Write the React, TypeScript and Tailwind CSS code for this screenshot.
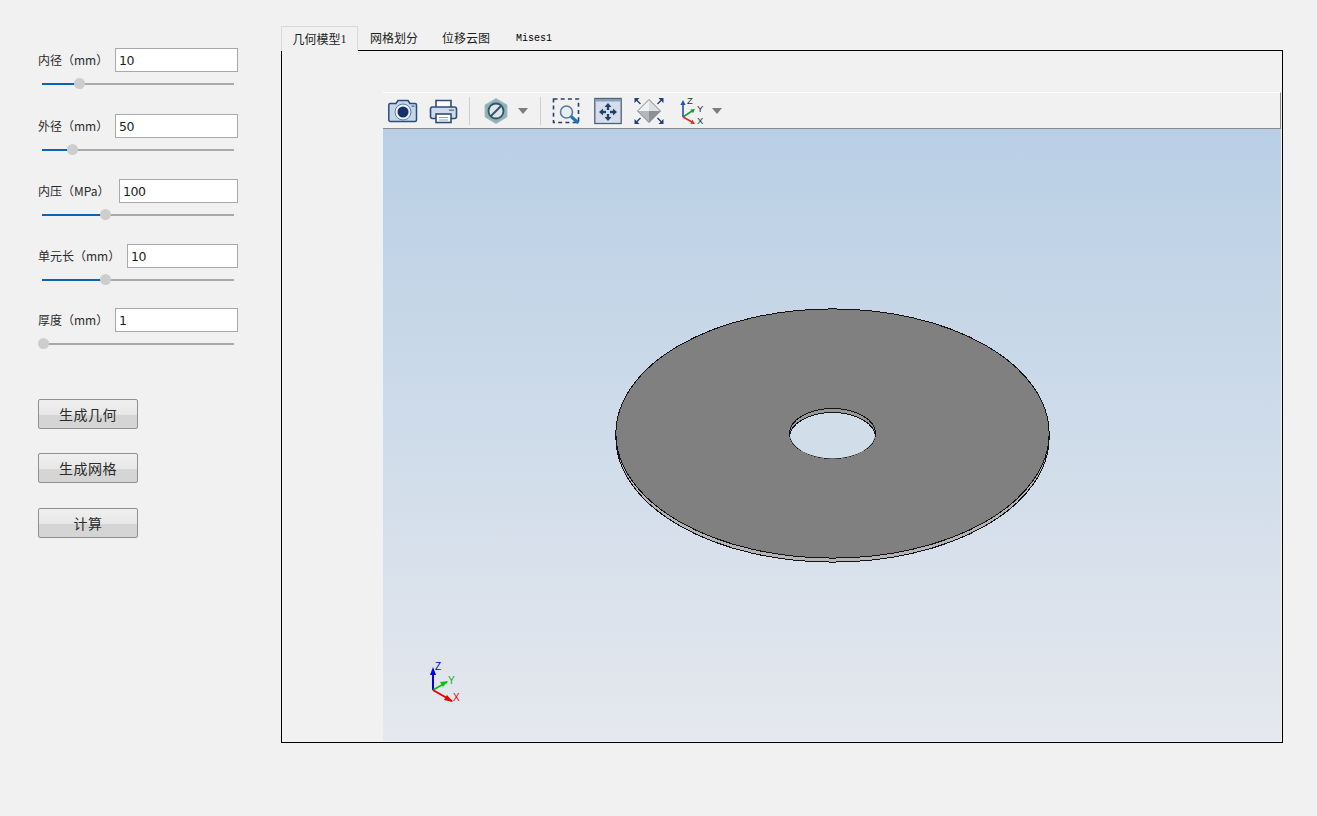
const fields = [
  { label: "内径（mm）", value: "10", input: "w-[123px]", gap: "mt-[48px]", thumb: 37 },
  { label: "外径（mm）", value: "50", input: "w-[123px]", gap: "mt-[24px]", thumb: 30 },
  { label: "内压（MPa）", value: "100", input: "w-[119px]", gap: "mt-[23px]", thumb: 63 },
  { label: "单元长（mm）", value: "10", input: "w-[111px]", gap: "mt-[23px]", thumb: 63 },
  { label: "厚度（mm）", value: "1", input: "w-[123px]", gap: "mt-[22px]", thumb: 1 },
]

const buttons = [
  { label: "生成几何", gap: "mt-[49px]" },
  { label: "生成网格", gap: "mt-[24px]" },
  { label: "计算", gap: "mt-[25px]" },
]

const tabs = [
  { label: "网格划分", cls: "w-[72px]" },
  { label: "位移云图", cls: "w-[72px]" },
]

const Field = ({ f }: { f: (typeof fields)[number] }) => (
  <div className={`${f.gap} pb-[5px]`}>
    <div className="flex h-[24px] items-center justify-between">
      <span className="whitespace-nowrap text-[12px] text-[#2a2a2a]">{f.label}</span>
      <input
        readOnly
        value={f.value}
        className={`${f.input} h-[24px] border border-[#a9a9a9] bg-white pt-px pl-[3px] font-['DejaVu_Sans',sans-serif] text-[12.5px] tracking-[-0.4px] text-[#1c1c1c] outline-none`}
      />
    </div>
    <div className="relative ml-[4px] mt-[11px] h-[2px] w-[192px] bg-[#a9a9a9]">
      <div className="h-full bg-[#0a64b4]" style={{ width: f.thumb }} />
      <div
        className="absolute top-[-5px] h-[11px] w-[11px] rounded-full bg-[#cdcdcd]"
        style={{ left: f.thumb - 5 }}
      />
    </div>
  </div>
)

const Camera = () => (
  <svg width="30" height="28" viewBox="0 0 30 28">
    <path d="M2 6.5h6l2-3h10l2 3h5a1.5 1.5 0 0 1 1.5 1.5v15a1.5 1.5 0 0 1-1.5 1.5H2A1.5 1.5 0 0 1 .8 23V8A1.5 1.5 0 0 1 2 6.5z" fill="#c5d6ea" stroke="#2c4d7c" strokeWidth="1.5" />
    <circle cx="15" cy="15" r="8" fill="#eef3f9" stroke="#5d7da6" />
    <circle cx="15" cy="15" r="5.5" fill="#14306a" />
    <rect x="23.5" y="8.5" width="3" height="1.5" fill="#5d7da6" />
  </svg>
)

const Printer = () => (
  <svg width="30" height="28" viewBox="0 0 30 28">
    <path d="M7 11V3.5h15V11" fill="#fff" stroke="#2c4d7c" strokeWidth="1.6" />
    <rect x="1.5" y="10" width="26" height="11.5" rx="2" fill="#cfdbe9" stroke="#2c4d7c" strokeWidth="1.6" />
    <rect x="20" y="12.5" width="5" height="1.5" fill="#6f7f92" />
    <rect x="7" y="17" width="15" height="8.5" fill="#fff" stroke="#2c4d7c" strokeWidth="1.6" />
    <path d="M10 20.5h9M10 23h9" stroke="#8ea0b5" />
  </svg>
)

const Section = () => (
  <svg width="26" height="28" viewBox="0 0 26 28">
    <path d="M13 1.5 24 8v12l-11 6.5L2 20V8z" fill="#8fb0b5" stroke="#a9bfc3" />
    <circle cx="13" cy="14" r="7.5" fill="#dfe6ea" stroke="#31566a" strokeWidth="1.8" />
    <path d="M8 19 18 9" stroke="#31566a" strokeWidth="2" />
  </svg>
)

const Caret = () => (
  <svg width="12" height="8" viewBox="0 0 12 8">
    <path d="M1 1h10L6 7z" fill="#7d7d7d" />
  </svg>
)

const ZoomBox = () => (
  <svg width="30" height="28" viewBox="0 0 30 28">
    <rect x="1.5" y="2" width="25" height="23.5" fill="none" stroke="#24406c" strokeWidth="1.6" strokeDasharray="4 3.2" />
    <circle cx="14.5" cy="15" r="6" fill="#e6eef6" stroke="#5d7a9c" strokeWidth="1.6" />
    <path d="M19 19.5 26.5 26" stroke="#1c75bc" strokeWidth="3" />
  </svg>
)

const FitView = () => (
  <svg width="28" height="28" viewBox="0 0 28 28">
    <rect x="0.8" y="1.5" width="26.4" height="25" fill="#d5deea" stroke="#4a6282" strokeWidth="1.3" />
    <rect x="1.5" y="2" width="25" height="2.5" fill="#8c9db4" />
    <path d="M14 6l3.5 4h-2.3v3h-2.4v-3h-2.3zM14 24l3.5-4h-2.3v-3h-2.4v3h-2.3zM5 15l4-3.5v2.3h3v2.4h-3v2.3zM23 15l-4-3.5v2.3h-3v2.4h3v2.3z" fill="#22406d" />
  </svg>
)

const Diamond = () => (
  <svg width="30" height="28" viewBox="0 0 30 28">
    <path d="M15 2.5 3.5 14H15z" fill="#eef0f2" />
    <path d="M15 2.5 26.5 14H15z" fill="#dcdfe2" />
    <path d="M15 25.5 3.5 14H15z" fill="#b4b7bb" />
    <path d="M15 25.5 26.5 14H15z" fill="#8d9095" />
    <path d="M15 2.5 26.5 14 15 25.5 3.5 14z" fill="none" stroke="#7d8590" />
    <path d="M0.5 1h5L.5 6zM29.5 1h-5l5 5zM.5 27h5l-5-5zM29.5 27h-5l5-5z" fill="#24406c" />
    <path d="M2 2.5l4.5 4.5M28 2.5l-4.5 4.5M2 25.5l4.5-4.5M28 25.5l-4.5-4.5" stroke="#24406c" strokeWidth="1.4" />
  </svg>
)

const ToolbarTriad = () => (
  <svg width="26" height="30" viewBox="0 0 26 30">
    <path d="M4 21V7" stroke="#1f4fc0" strokeWidth="1.6" />
    <path d="M4 4l2.6 5H1.4z" fill="#1f4fc0" />
    <path d="M4 21l9-6" stroke="#1d9a3c" strokeWidth="1.6" />
    <path d="M16 13l-2 4.2-2.7-3.8z" fill="#1d9a3c" />
    <path d="M4 21l9 5" stroke="#e02a2a" strokeWidth="1.6" />
    <path d="M16 28l-4.8-.3 2.2-3.9z" fill="#e02a2a" />
    <text x="8" y="8" fontSize="9.5" fill="#303030" fontFamily="Liberation Sans">Z</text>
    <text x="18" y="16" fontSize="9.5" fill="#303030" fontFamily="Liberation Sans">Y</text>
    <text x="18" y="28" fontSize="9.5" fill="#303030" fontFamily="Liberation Sans">X</text>
  </svg>
)

const Sep = () => <div className="h-[28px] w-px bg-[#cfcfcf]" />

const Toolbar = () => (
  <div className="flex h-[37px] shrink-0 items-center border-t border-r border-b border-t-white border-r-[#8a8a8a] border-b-[#8a8a8a] bg-[#f1f1f1] pl-[5px]">
    <Camera />
    <div className="ml-[11px]"><Printer /></div>
    <div className="ml-[10px]"><Sep /></div>
    <div className="ml-[13px]"><Section /></div>
    <div className="ml-[8px]"><Caret /></div>
    <div className="ml-[11px]"><Sep /></div>
    <div className="ml-[11px]"><ZoomBox /></div>
    <div className="ml-[12px]"><FitView /></div>
    <div className="ml-[12px]"><Diamond /></div>
    <div className="ml-[15px]"><ToolbarTriad /></div>
    <div className="ml-[6px]"><Caret /></div>
  </div>
)

const Scene = () => (
  <svg className="block h-full w-full" viewBox="0 0 898 612">
    <defs>
      <clipPath id="hole">
        <ellipse cx="449.5" cy="304.5" rx="43" ry="25" />
      </clipPath>
    </defs>
    <g shapeRendering="crispEdges" stroke="#141414" strokeWidth="1">
      <ellipse cx="449.5" cy="308.5" rx="216.6" ry="124.6" fill="#b4b4b4" />
      <ellipse cx="449.5" cy="304.5" rx="216.6" ry="124.6" fill="#808080" />
      <ellipse cx="449.5" cy="304.5" rx="43" ry="25" fill="#979797" />
      <ellipse cx="449.5" cy="308.5" rx="43" ry="25" fill="#d1dde9" clipPath="url(#hole)" />
    </g>
    <path d="M50 561V546" stroke="#0000e0" strokeWidth="2" />
    <path d="M50 538l3 8h-6z" fill="#0000e0" />
    <path d="M50 561l14-8" stroke="#12c012" strokeWidth="2" />
    <path d="M65 552l-5 6-3-5z" fill="#12c012" />
    <path d="M50 561l19 11" stroke="#e80000" strokeWidth="2" />
    <path d="M70 573l-9-2 3-5z" fill="#e80000" />
    <text x="52" y="541" fontSize="10" fill="#0000e0" fontFamily="Liberation Sans">Z</text>
    <text x="65" y="555" fontSize="10" fill="#12b012" fontFamily="Liberation Sans">Y</text>
    <text x="70" y="572" fontSize="10" fill="#e80000" fontFamily="Liberation Sans">X</text>
  </svg>
)

export default function App() {
  return (
    <div className="flex h-[816px] w-[1317px] overflow-hidden bg-[#f1f1f1] font-['Noto_Sans_CJK_SC',sans-serif]">
      <div className="w-[281px] shrink-0 pl-[38px]">
        <div className="w-[200px]">
          {fields.map((f) => (
            <Field key={f.label} f={f} />
          ))}
          {buttons.map((b) => (
            <button
              key={b.label}
              className={`${b.gap} block h-[30px] w-[100px] rounded-[2px] border border-[#8f8f8f] bg-[linear-gradient(#f0f0f0_0%,#e7e7e7_53%,#d5d5d5_53%,#d5d5d5_100%)] text-[14px] tracking-[0.5px] text-[#2a2a2a]`}
            >
              {b.label}
            </button>
          ))}
        </div>
      </div>
      <div className="w-[1002px] pt-[26px]">
        <div className="flex h-[25px] items-stretch">
          <div className="z-10 flex h-[25px] w-[77px] items-center justify-center border border-b-0 border-[#d9d9d9] bg-[#f1f1f1] text-[12px] text-[#1c1c1c]">
            几何模型<span className="font-['Liberation_Serif',serif]">1</span>
          </div>
          {tabs.map((t) => (
            <div key={t.label} className={`${t.cls} flex h-[24px] items-center justify-center text-[12px] text-[#1c1c1c]`}>
              {t.label}
            </div>
          ))}
          <div className="flex h-[24px] w-[64px] items-center justify-center font-['Liberation_Mono',monospace] text-[10px] text-black">
            Mises1
          </div>
        </div>
        <div className="-mt-px h-[693px] border border-black pt-[41px] pr-px pb-px pl-[101px]">
          <div className="flex h-full flex-col">
            <Toolbar />
            <div className="min-h-0 flex-1 bg-linear-to-b from-[#b9cfe5] to-[#e5e8ee]">
              <Scene />
            </div>
          </div>
        </div>
      </div>
    </div>
  )
}
